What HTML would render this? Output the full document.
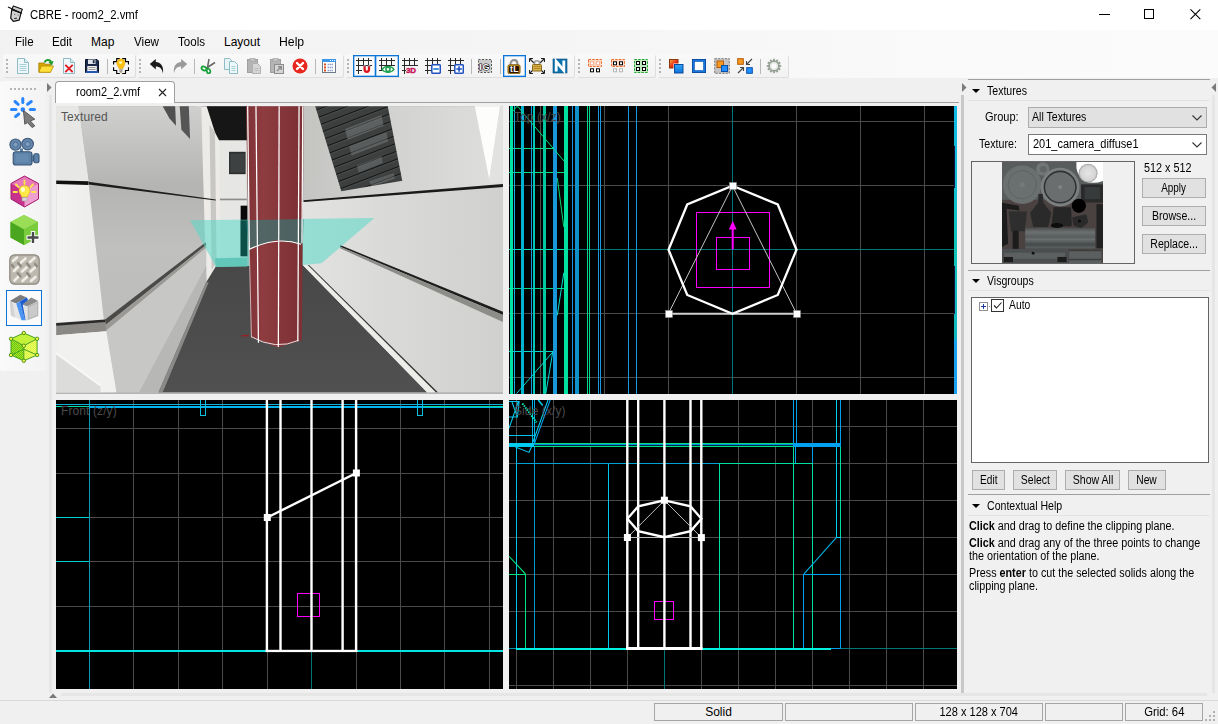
<!DOCTYPE html>
<html>
<head>
<meta charset="utf-8">
<title>CBRE - room2_2.vmf</title>
<style>
*{box-sizing:border-box;margin:0;padding:0}
html,body{width:1218px;height:724px;overflow:hidden;background:#f0f0f0}
body{position:relative;font-family:"Liberation Sans",sans-serif;font-size:11px;color:#000}
.abs{position:absolute}
.t{position:absolute;white-space:nowrap;transform-origin:0 50%}
#title{left:0;top:0;width:1218px;height:30px;background:#fff}
#menubar{left:0;top:30px;width:1218px;height:48px;background:linear-gradient(90deg,#f2f2f2 0%,#f5f5f5 45%,#fafafa 80%,#fbfbfb 100%)}
.mi{position:absolute;top:35px;font-size:12px;line-height:14px;white-space:nowrap;transform-origin:0 50%;transform:scaleX(.93)}
.strip{position:absolute;top:54px;height:23px;background:linear-gradient(#f9f9f9,#f2f2f2);border-radius:2px;box-shadow:1px 1px 0 #dedede}
.grip{position:absolute;top:59px;width:2px;height:14px;background:repeating-linear-gradient(#b4b4b4 0 2px,transparent 2px 4px)}
.sep{position:absolute;top:59px;width:1px;height:15px;background:#b8b8b8}
.ic{position:absolute;top:58px;width:16px;height:16px}
.sel{position:absolute;border:1px solid #0a74d8;background:#fafafa;box-shadow:inset 0 0 0 .5px #5aa2e4}
.vp{position:absolute;overflow:hidden;background:#000}
.vl{position:absolute;left:5px;top:4px;font-size:12px;line-height:14px;color:#555;white-space:nowrap;letter-spacing:.1px}
.btn{position:absolute;height:20px;border:1px solid #adadad;background:#e1e1e1;text-align:center;line-height:18.500px;font-size:12.500px;white-space:nowrap;overflow:visible}
.hdr{position:absolute;left:986.500px;margin-top:-.5px;font-size:12.500px;line-height:13px;white-space:nowrap;transform-origin:0 50%;transform:scaleX(0.845)}
.tri{position:absolute;left:972px;width:0;height:0;border-left:4px solid transparent;border-right:4px solid transparent;border-top:4px solid #000}
.hl{position:absolute;left:968px;width:242px;height:1px}
.sb{position:absolute;top:703px;height:18px;border:1px solid #a6a6a6;background:#f0f0f0;text-align:center;font-size:12px;line-height:16px}
.help{position:absolute;left:969px;margin-top:-.5px;font-size:12.500px;line-height:13px;white-space:nowrap;transform-origin:0 50%;transform:scaleX(0.862)}
</style>
</head>
<body>
<!-- TITLE BAR -->
<div id="title" class="abs"></div>
<div class="t" style="left:30px;top:7px;font-size:12px;line-height:16px;transform:scaleX(.947)">CBRE - room2_2.vmf</div>
<svg class="abs" style="left:0;top:0" width="30" height="30" viewBox="0 0 30 30"><path d="M11.800 9.600 L10.700 18.200 L13.300 21.400 L19.200 20.100 L21.100 12.900Z" fill="#d2d2d2" stroke="#111" stroke-width="1.200" stroke-linejoin="round"/><path d="M13.400 6 L22.300 9.200 L20.800 13.100 L11.900 9.300Z" fill="#cfcfcf" stroke="#111" stroke-width="1.100" stroke-linejoin="round"/><path d="M8 7 L21.800 13.300" stroke="#111" stroke-width="1.100"/><path d="M14.200 18.500 L17 18.200" stroke="#222" stroke-width="1"/><path d="M14 14.300 L15.300 14.600 M17.500 15 L18.600 15.200" stroke="#555" stroke-width=".8"/></svg>

<svg class="abs" style="left:1090px;top:0" width="128" height="30"><path d="M9 14.500h11" stroke="#000" stroke-width="1" fill="none" shape-rendering="crispEdges"/><rect x="54.500" y="9.500" width="9" height="9" fill="none" stroke="#000" shape-rendering="crispEdges"/><path d="M100.500 9.300 L110.300 19.100 M110.300 9.300 L100.500 19.100" stroke="#000" stroke-width="1.050" fill="none"/></svg>


<!-- MENU -->
<div id="menubar" class="abs"></div>
<div class="mi" style="left:15px;transform:scaleX(0.96)">File</div>
<div class="mi" style="left:52px;transform:scaleX(0.97)">Edit</div>
<div class="mi" style="left:91px;transform:scaleX(1.0)">Map</div>
<div class="mi" style="left:134px;transform:scaleX(0.97)">View</div>
<div class="mi" style="left:178px;transform:scaleX(0.965)">Tools</div>
<div class="mi" style="left:224px;transform:scaleX(1.0)">Layout</div>
<div class="mi" style="left:279px;transform:scaleX(1.02)">Help</div>

<!-- TOOLBAR -->
<div class="strip" style="left:3px;width:132px"></div>
<div class="strip" style="left:137px;width:206px"></div>
<div class="strip" style="left:345px;width:229px"></div>
<div class="strip" style="left:576px;width:79px"></div>
<div class="strip" style="left:657px;width:131px"></div>
<div class="grip" style="left:6px"></div>
<svg class="ic" style="left:15px;top:58px" viewBox="0 0 16 16"><path d="M2.500 .5 H9.500 L13.500 4.500 V15.500 H2.500Z" fill="#eef8fa" stroke="#8fbcc4"/><path d="M9.500 .5 V4.500 H13.500" fill="#d8ecf0" stroke="#8fbcc4"/><path d="M4.500 6.500h7M4.500 8.500h7M4.500 10.500h7M4.500 12.500h7" stroke="#a9cfd6"/></svg>
<svg class="ic" style="left:38px;top:58px" viewBox="0 0 16 16"><path d="M.8 5 H6 L7 6.200 H12.500 V14 H.8Z" fill="#d9a600" stroke="#a87f00" stroke-width=".8"/><path d="M3.300 8 H15.500 L12.600 14.300 H.8Z" fill="#ffdf3a" stroke="#b28a00" stroke-width=".8"/><path d="M6.500 4.500 C7.500 1.500 11.500 1 13 3.800" fill="none" stroke="#1a9a2c" stroke-width="2"/><path d="M10.300 4 L15.500 3 L14 7.600Z" fill="#1a9a2c"/></svg>
<svg class="ic" style="left:61px;top:58px" viewBox="0 0 16 16"><path d="M2.500 .5 H9.500 L13.500 4.500 V15.500 H2.500Z" fill="#eef8fa" stroke="#8fbcc4"/><path d="M9.500 .5 V4.500 H13.500" fill="#d8ecf0" stroke="#8fbcc4"/><path d="M4.300 6.800 L11.700 14.200 M11.700 6.800 L4.300 14.200" stroke="#e01b24" stroke-width="1.900"/></svg>
<svg class="ic" style="left:84px;top:58px" viewBox="0 0 16 16"><path d="M1.500 1.500 H13 L14.500 3 V14.500 H1.500Z" fill="#1c2a4a" stroke="#0c1428"/><rect x="4" y="1.500" width="7.500" height="4.500" fill="#dfe3ea"/><rect x="8.800" y="2.200" width="1.800" height="3" fill="#1c2a4a"/><rect x="3.300" y="8" width="9.500" height="5" fill="#f2f2f2"/><path d="M4.500 9.500h7M4.500 11.500h7" stroke="#999"/><rect x="2" y="13.300" width="12" height="1.500" fill="#2a6bd8"/></svg>
<div class="sep" style="left:107px"></div>
<svg class="ic" style="left:113px;top:58px" viewBox="0 0 16 16"><path d="M6.800 .6 H3.700 V3.600 H.6 V6.600 M.6 9.300 V12.500 H3.700 V15.500 H6.800 M9.200 15.500 H12.500 V12.500 H15.500 V9.300 M15.500 6.600 V3.600 H12.500 V.6 H9.200" fill="none" stroke="#000" stroke-width="1.150"/><path d="M7.900 1 C10.600 1 12 3 12 5.200 C12 7.600 10 8.600 9.900 10.800 H5.900 C5.800 8.600 3.800 7.600 3.800 5.200 C3.800 3 5.200 1 7.900 1Z" fill="#fcc010" stroke="#e8a200" stroke-width=".5"/><ellipse cx="7.600" cy="4.600" rx="1.700" ry="1.300" fill="#fff4b0"/><rect x="6.200" y="11.100" width="3.400" height="2.600" fill="#a8a8a8"/><rect x="6.900" y="13.600" width="2" height=".9" fill="#8a6a2a"/></svg>
<div class="grip" style="left:139px"></div>
<svg class="ic" style="left:149px;top:58px" viewBox="0 0 16 16"><path d="M.8 6 L6.800 1 V4 C11.500 4 15 8 14 15.500 C13 10.500 10.500 8.600 6.800 8.600 V11.500Z" fill="#1a1a1a"/></svg>
<svg class="ic" style="left:172px;top:58px" viewBox="0 0 16 16"><path d="M15.200 6 L9.200 1 V4 C4.500 4 1 8 2 15.500 C3 10.500 5.500 8.600 9.200 8.600 V11.500Z" fill="#9a9a9a"/></svg>
<div class="sep" style="left:194px"></div>
<svg class="ic" style="left:200px;top:58px" viewBox="0 0 16 16"><path d="M9 1 L7.500 9.500 M15 4.500 L6.500 10" stroke="#666" stroke-width="1.500" fill="none"/><ellipse cx="4" cy="10.500" rx="2.600" ry="1.800" fill="none" stroke="#16a03a" stroke-width="1.700" transform="rotate(25 4 10.500)"/><ellipse cx="8.500" cy="13" rx="1.700" ry="2.500" fill="none" stroke="#16a03a" stroke-width="1.700" transform="rotate(-15 8.500 13)"/></svg>
<svg class="ic" style="left:223px;top:58px" viewBox="0 0 16 16"><path d="M1.500 .5 H6.500 L9.500 3.500 V11.500 H1.500Z" fill="#e6f4f6" stroke="#8fbcc4"/><path d="M6.500 3.500 H11.500 L14.500 6.500 V15.500 H6.500Z" fill="#eef8fa" stroke="#8fbcc4"/><path d="M8.500 8.500h4M8.500 10.500h4M8.500 12.500h4" stroke="#a9cfd6"/></svg>
<svg class="ic" style="left:246px;top:58px" viewBox="0 0 16 16"><rect x="1.500" y="1.500" width="10" height="13" fill="#b4b4b4" stroke="#a0a0a0"/><rect x="4" y=".5" width="5" height="2.500" fill="#c8c8c8" stroke="#a0a0a0" stroke-width=".6"/><path d="M6.500 5.500 H11.500 L14.500 8.500 V15.500 H6.500Z" fill="#d6d6d6" stroke="#b0b0b0"/><path d="M8.500 10.500h4M8.500 12.500h4" stroke="#bcbcbc"/></svg>
<svg class="ic" style="left:269px;top:58px" viewBox="0 0 16 16"><rect x="1.500" y="1.500" width="10" height="13" fill="#b4b4b4" stroke="#a0a0a0"/><rect x="4" y=".5" width="5" height="2.500" fill="#c8c8c8" stroke="#a0a0a0" stroke-width=".6"/><rect x="5.500" y="6.500" width="9" height="9" fill="#d4d4d4" stroke="#8c8c8c"/><path d="M8 13 L12 9 M9 8.700 H12.300 V12" fill="none" stroke="#8c8c8c" stroke-width="1.400"/></svg>
<svg class="ic" style="left:292px;top:58px" viewBox="0 0 16 16"><circle cx="8" cy="8" r="7.500" fill="#e8281e"/><path d="M5 5 L11 11 M11 5 L5 11" stroke="#fff" stroke-width="2.400" stroke-linecap="round"/></svg>
<div class="sep" style="left:315px"></div>
<svg class="ic" style="left:321px;top:58px" viewBox="0 0 16 16"><rect x="1.500" y="1.500" width="13" height="13" fill="#fff" stroke="#6d7a8a"/><rect x="1" y="1" width="14" height="3" fill="#3a96e8"/><path d="M9 2.500h1M11 2.500h1M13 2.500h1" stroke="#fff"/><rect x="3" y="5.500" width="2" height="2" fill="#d8501c"/><rect x="3" y="8.500" width="2" height="2" fill="#d8501c"/><rect x="3" y="11.500" width="2" height="2" fill="#d8501c"/><path d="M6.500 6.500h6M6.500 9.500h6M6.500 12.500h6" stroke="#8aa0c8" stroke-width="1.400" stroke-dasharray="1.500 .5"/></svg>
<div class="grip" style="left:347px"></div>
<div class="sel" style="left:353px;top:55px;width:23px;height:22px"></div>
<div class="sel" style="left:375px;top:55px;width:24px;height:22px"></div>
<svg class="ic" style="left:356px;top:58px" viewBox="0 0 16 16"><path d="M2.500 0V16M7.500 0V8M12.500 0V8M0 2.500H16M0 7.500H16M0 12.500H6" stroke="#2a2a2a" stroke-width="1" fill="none"/><path d="M8.600 8 V11.300 C8.600 14.600 13 14.600 13 11.300 V8" fill="none" stroke="#e0141e" stroke-width="2.300"/><path d="M7.450 7.800h2.300M11.850 7.800h2.300" stroke="#8a8a8a" stroke-width="1.400"/></svg>
<svg class="ic" style="left:379px;top:58px" viewBox="0 0 16 16"><path d="M2.500 0V12M7.500 0V7.500M12.500 0V7.500M0 2.500H16M0 7.500H16M0 12.500H3.500" stroke="#2a2a2a" stroke-width="1" fill="none"/><path d="M3 11.400 C6 7.400 12 7.400 15 11.400 C12 15.300 6 15.300 3 11.400Z" fill="#fff" stroke="#19a04a" stroke-width="1.200"/><circle cx="9" cy="11.300" r="2.100" fill="#fff" stroke="#19a04a" stroke-width="1.500"/></svg>
<svg class="ic" style="left:402px;top:58px" viewBox="0 0 16 16"><path d="M2.500 0V16M7.500 0V8M12.500 0V8M0 2.500H16M0 7.500H16M0 12.500H4" stroke="#2a2a2a" stroke-width="1" fill="none"/><text x="4" y="15.300" font-family="Liberation Sans,sans-serif" font-weight="bold" font-size="8" fill="#c8105a" stroke="#c8105a" stroke-width=".4" letter-spacing="-.3">3D</text></svg>
<svg class="ic" style="left:425px;top:58px" viewBox="0 0 16 16"><path d="M2.500 0V16M7.500 0V7M12.500 0V7M0 2.500H16M0 7.500H7M0 12.500H7" stroke="#2a2a2a" stroke-width="1" fill="none"/><rect x="6.800" y="6.800" width="8.500" height="8.500" rx="1" fill="#fff" stroke="#2252c0" stroke-width="1.500"/><path d="M8.300 11h5.500" stroke="#1a78d0" stroke-width="1.600"/></svg>
<svg class="ic" style="left:448px;top:58px" viewBox="0 0 16 16"><path d="M2.500 0V16M7.500 0V7M12.500 0V7M0 2.500H16M0 7.500H7M0 12.500H7" stroke="#2a2a2a" stroke-width="1" fill="none"/><rect x="6.800" y="6.800" width="8.500" height="8.500" rx="1" fill="#fff" stroke="#2252c0" stroke-width="1.500"/><path d="M8.300 11h5.500M11.050 8.300v5.500" stroke="#1a50c0" stroke-width="1.600"/></svg>
<div class="sep" style="left:471px"></div>
<svg class="ic" style="left:477px;top:58px" viewBox="0 0 16 16"><rect x="1.500" y="1.500" width="13" height="13" fill="#cbcbcb" stroke="#555" stroke-dasharray="2 1.500"/><text x="2.300" y="11.600" font-family="Liberation Sans,sans-serif" font-weight="bold" font-size="9" fill="#fff" stroke="#000" stroke-width="1.100" paint-order="stroke" letter-spacing=".6">IG</text></svg>
<div class="sep" style="left:500px"></div>
<div class="sel" style="left:503px;top:55px;width:23px;height:22px"></div>
<svg class="ic" style="left:506px;top:58px" viewBox="0 0 16 16"><path d="M4.700 8 V5.500 C4.700 1 11.300 1 11.300 5.500 V8" fill="none" stroke="#8e8e8e" stroke-width="2.200"/><path d="M5.800 8 V5.600 C5.800 2.600 10.200 2.600 10.200 5.600 V8" fill="none" stroke="#d8d8d8" stroke-width=".8"/><rect x="2" y="6.800" width="12" height="9" rx="1.500" fill="#c8962a" stroke="#7a5608"/><rect x="3" y="8" width="10" height="7" rx="1" fill="#2a1400"/><text x="4" y="14.300" font-family="Liberation Sans,sans-serif" font-weight="bold" font-size="8.500" fill="#fff" letter-spacing=".5">tL</text></svg>
<svg class="ic" style="left:529px;top:58px" viewBox="0 0 16 16"><path d="M1 1 L5 5 M15 1 L11 5 M1 15 L5 11 M15 15 L11 11" stroke="#222" stroke-width="1.100"/><path d="M.5 .5H4M.5 .5V4M15.500 .5H12M15.500 .5V4M.5 15.500H4M.5 15.500V12M15.500 15.500H12M15.500 15.500V12" stroke="#222" stroke-width="1.100" fill="none"/><path d="M5.500 7 V5 C5.500 2 10.500 2 10.500 5 V7" fill="none" stroke="#9a9a9a" stroke-width="1.600"/><rect x="3.500" y="6.500" width="9" height="6.500" rx="1" fill="#d8b050" stroke="#8a6a18"/><path d="M4.500 8.500h7M4.500 10.500h7" stroke="#b08820"/></svg>
<svg class="ic" style="left:552px;top:58px" viewBox="0 0 16 16"><rect x="1" y="1" width="14" height="14" fill="#0b72b0"/><rect x="1" y="1" width="14" height="14" fill="none" stroke="#084a78" stroke-width=".6"/><path d="M4.200 13.500 V3.500 L11.800 12.500 V2.500" fill="none" stroke="#fff" stroke-width="2.800" stroke-linejoin="miter"/></svg>
<div class="grip" style="left:578px"></div>
<svg class="ic" style="left:587px;top:58px" viewBox="0 0 16 16"><rect x="1.500" y="1.500" width="13" height="7" fill="#ffd8c4" stroke="#ec6a2c" stroke-width="1" stroke-dasharray="2.500 1.200"/><rect x="3.5" y="3.8" width="3" height="3" fill="#fff" stroke="#f4b294" stroke-width="1"/><rect x="9.5" y="3.8" width="3" height="3" fill="#fff" stroke="#f4b294" stroke-width="1"/><rect x="3.5" y="10.8" width="3" height="3" fill="#fff" stroke="#000" stroke-width="1"/><rect x="9.5" y="10.8" width="3" height="3" fill="#fff" stroke="#000" stroke-width="1"/></svg>
<svg class="ic" style="left:610px;top:58px" viewBox="0 0 16 16"><rect x="1.500" y="1.500" width="13" height="7" fill="#ffd8c4" stroke="#ec6a2c" stroke-width="1" stroke-dasharray="2.500 1.200"/><rect x="3.5" y="3.8" width="3" height="3" fill="#fff" stroke="#000" stroke-width="1"/><rect x="9.5" y="3.8" width="3" height="3" fill="#fff" stroke="#000" stroke-width="1"/><rect x="3.5" y="10.8" width="3" height="3" fill="#fff" stroke="#b4b4b4" stroke-width="1"/><rect x="9.5" y="10.8" width="3" height="3" fill="#fff" stroke="#b4b4b4" stroke-width="1"/></svg>
<svg class="ic" style="left:633px;top:58px" viewBox="0 0 16 16"><rect x="1.500" y="1.500" width="13" height="13" fill="#bfeabf" stroke="#22a832" stroke-width="1" stroke-dasharray="2.500 1.200"/><rect x="3.5" y="3.5" width="3" height="3" fill="#fff" stroke="#000" stroke-width="1"/><rect x="9.5" y="3.5" width="3" height="3" fill="#fff" stroke="#000" stroke-width="1"/><rect x="3.5" y="9.5" width="3" height="3" fill="#fff" stroke="#000" stroke-width="1"/><rect x="9.5" y="9.5" width="3" height="3" fill="#fff" stroke="#000" stroke-width="1"/></svg>
<div class="grip" style="left:659px"></div>
<svg class="ic" style="left:668px;top:58px" viewBox="0 0 16 16"><defs><linearGradient id="cv1" x1="0" y1="0" x2="1" y2="1"><stop offset="0" stop-color="#f8b040"/><stop offset=".6" stop-color="#e82010"/></linearGradient><linearGradient id="cv2" x1="0" y1="0" x2="0" y2="1"><stop offset="0" stop-color="#30a8f8"/><stop offset="1" stop-color="#1070d8"/></linearGradient></defs><rect x="1.500" y="1.500" width="8.500" height="8.500" fill="url(#cv1)" stroke="#8a3808"/><rect x="5.500" y="5.500" width="10" height="10" fill="#fff"/><rect x="6.500" y="6.500" width="8.500" height="8.500" fill="url(#cv2)" stroke="#0a4a9a"/></svg>
<svg class="ic" style="left:691px;top:58px" viewBox="0 0 16 16"><rect x="1" y="1" width="14" height="14" fill="#0a3e8a"/><rect x="1.700" y="1.700" width="12.600" height="12.600" fill="#1878e0"/><rect x="3.600" y="3.600" width="8.800" height="8.800" fill="#fff" stroke="#0a4ea8" stroke-width=".5"/></svg>
<svg class="ic" style="left:714px;top:58px" viewBox="0 0 16 16"><rect x=".7" y=".7" width="14.600" height="14.600" fill="#c4c4c4" stroke="#7a7a7a" stroke-dasharray="2.200 1.200"/><rect x="3" y="3" width="6.500" height="6.500" fill="#f59a20" stroke="#b85a08"/><rect x="7.500" y="7.500" width="6" height="6" fill="#1e90ff" stroke="#0a4ea8"/></svg>
<svg class="ic" style="left:737px;top:58px" viewBox="0 0 16 16"><rect x=".7" y=".7" width="5.600" height="5.600" fill="#f59a20" stroke="#b85a08"/><rect x="9.700" y="9.700" width="5.600" height="5.600" fill="#1e90ff" stroke="#0a4ea8"/><path d="M15 1 L9.500 6.500 M9.500 3 V6.500 H13 M1 15 L6.500 9.500 M3 9.500 H6.500 V13" fill="none" stroke="#444" stroke-width="1.100"/></svg>
<div class="sep" style="left:760px"></div>
<svg class="ic" style="left:766px;top:58px" viewBox="0 0 16 16"><rect x="7.100" y=".8" width="1.800" height="3" fill="#949e92" transform="rotate(0 8 8)"/><rect x="7.100" y=".8" width="1.800" height="3" fill="#949e92" transform="rotate(30 8 8)"/><rect x="7.100" y=".8" width="1.800" height="3" fill="#949e92" transform="rotate(60 8 8)"/><rect x="7.100" y=".8" width="1.800" height="3" fill="#949e92" transform="rotate(90 8 8)"/><rect x="7.100" y=".8" width="1.800" height="3" fill="#949e92" transform="rotate(120 8 8)"/><rect x="7.100" y=".8" width="1.800" height="3" fill="#949e92" transform="rotate(150 8 8)"/><rect x="7.100" y=".8" width="1.800" height="3" fill="#949e92" transform="rotate(180 8 8)"/><rect x="7.100" y=".8" width="1.800" height="3" fill="#949e92" transform="rotate(210 8 8)"/><rect x="7.100" y=".8" width="1.800" height="3" fill="#949e92" transform="rotate(240 8 8)"/><rect x="7.100" y=".8" width="1.800" height="3" fill="#949e92" transform="rotate(270 8 8)"/><rect x="7.100" y=".8" width="1.800" height="3" fill="#949e92" transform="rotate(300 8 8)"/><rect x="7.100" y=".8" width="1.800" height="3" fill="#949e92" transform="rotate(330 8 8)"/><circle cx="8" cy="8" r="4.900" fill="#fbfbfb" stroke="#949e92" stroke-width="1.700"/><circle cx="8" cy="8" r="3.300" fill="none" stroke="#d0d4ce" stroke-width=".7"/></svg>

<!-- LEFT TOOLS -->
<div class="abs" style="left:0;top:81px;width:46px;height:290px;background:linear-gradient(90deg,#fafafa,#f3f3f3);border-radius:3px 0 0 3px"></div>
<div class="abs" style="left:10px;top:88px;width:26px;height:2px;background:repeating-linear-gradient(90deg,#b4b4b4 0 2px,transparent 2px 4px)"></div>
<!-- pointer -->
<svg class="abs" style="left:8px;top:96px" width="32" height="32" viewBox="0 0 32 32"><g stroke="#2a86ff" stroke-width="3" stroke-linecap="round"><path d="M14.800 2.500V6.500M3.500 13.600H8M22.200 13.600H26.500M7 5.500 L10.200 8.300M19.600 8.300 L23.300 5.500M7.600 20.500 L10.800 18"/></g><circle cx="14.800" cy="13.600" r="2.300" fill="#2a86ff"/><path d="M15.400 14.400 L26.800 23.200 L22.300 24.900 L26.800 29.900 L24 31.500 L19.600 26.600 L16.800 28.200Z" fill="#7c7c7c" stroke="#4e4e4e" stroke-width=".9" stroke-linejoin="round"/></svg>
<!-- camera -->
<svg class="abs" style="left:8px;top:137px" width="32" height="30" viewBox="0 0 32 30"><circle cx="7.500" cy="7.600" r="5.600" fill="#6488ae" stroke="#3e5878" stroke-width="1.100"/><circle cx="7.500" cy="7.600" r="2.600" fill="#7c9cc0" stroke="#466486" stroke-width=".8"/><circle cx="19.600" cy="7.100" r="5.800" fill="#6488ae" stroke="#3e5878" stroke-width="1.100"/><circle cx="19.600" cy="7.100" r="2.700" fill="#7c9cc0" stroke="#466486" stroke-width=".8"/><rect x="12" y="11.500" width="3" height="4" fill="#5a7ea4"/><rect x="5.200" y="14.800" width="18.800" height="13.200" rx="2.600" fill="#5c82a8" stroke="#3a5676" stroke-width="1.100"/><rect x="7.500" y="17" width="13" height="8" rx="1.500" fill="#6a8eb4" opacity=".7"/><rect x="23.500" y="19" width="3" height="5" fill="#5478a0" stroke="#3a5676" stroke-width=".6"/><rect x="25.800" y="16.800" width="5.200" height="9" rx="1.600" fill="#5c82a8" stroke="#3a5676" stroke-width="1.100"/></svg>
<!-- light entity -->
<svg class="abs" style="left:9px;top:175px" width="32" height="33" viewBox="0 0 32 33"><path d="M15.500 1 L29.500 8.500 V24 L15.500 32 L2 24 V8.500Z" fill="#c8328c"/><path d="M15.500 1 L29.500 8.500 L15.500 16 L2 8.500Z" fill="#e878b8"/><path d="M15.500 16 L29.500 8.500 V24 L15.500 32Z" fill="#f0a0d0"/><path d="M15.500 1 L29.500 8.500 V24 L15.500 32 L2 24 V8.500Z" fill="none" stroke="#a02070" stroke-width="1"/><g stroke="#ffe84a" stroke-width="1.800" stroke-linecap="round"><path d="M15.500 5.500V9M7 9.500 L9.500 12M24 9.500 L21.500 12M4.500 17H8M26.500 17H23"/></g><path d="M15.500 10.500 C19.500 10.500 21 13.500 21 15.500 C21 18.500 18.500 19.500 18.500 22 H12.500 C12.500 19.500 10 18.500 10 15.500 C10 13.500 11.500 10.500 15.500 10.500Z" fill="#ffe84a" stroke="#e0b010" stroke-width=".6"/><ellipse cx="14" cy="14.500" rx="2" ry="2.500" fill="#fffbd0"/><rect x="13" y="22.500" width="5" height="3.500" fill="#d8d8d8" stroke="#999" stroke-width=".5"/></svg>
<!-- green cube -->
<svg class="abs" style="left:8px;top:213px" width="34" height="34" viewBox="0 0 34 34"><path d="M16 2 L30 9 V24.500 L16 32 L2.500 24.500 V9Z" fill="#5cb82c"/><path d="M16 2 L30 9 L16 16.500 L2.500 9Z" fill="#9ade58"/><path d="M16 16.500 L30 9 V24.500 L16 32Z" fill="#7acc3c"/><path d="M16 16.500 L2.500 9 V24.500 L16 32Z" fill="#4aa61e"/><path d="M25 18 V31 M18.500 24.500 H31.500" stroke="#fff" stroke-width="4.400"/><path d="M25 19 V30 M19.500 24.500 H30.500" stroke="#4a4a4a" stroke-width="2.400"/></svg>
<!-- texture -->
<svg class="abs" style="left:9px;top:254px" width="31" height="31" viewBox="0 0 31 31"><rect x=".8" y=".8" width="29.400" height="29.400" rx="5" fill="#bdb8ae" stroke="#8a867e" stroke-width="1.200"/><g stroke="#efede8" stroke-width="2.600" stroke-linecap="round"><path d="M4 7 L8 3.500M12 8.500 L16.500 4.500M21 8 L25.500 4M5 17 L9 13M13 17.500 L17.500 13.500M21.500 17.500 L26 13.500M5.500 26.500 L9.500 22.500M13.500 27 L18 23M22 27 L26.500 23"/></g><g stroke="#8e8a82" stroke-width="2.200" stroke-linecap="round"><path d="M9 9 L12 12.500M18 9.500 L21 13M8.500 19 L11.500 22.500M18 19 L21 22.500M26 10 L28 12.500M3 11 L4.500 13"/></g></svg>
<!-- clip (selected) -->
<div class="abs" style="left:6px;top:290px;width:36px;height:36px;border:1px solid #0a74d8;background:#fafafa"></div>
<svg class="abs" style="left:8px;top:293px" width="32" height="30" viewBox="0 0 32 30"><path d="M1.900 8.100 L12.300 1.700 L18.700 4.600 L8.200 10.400Z" fill="#7c7c7c"/><path d="M1.900 8.400 L8.200 10.500 L13.500 27.200 L3 22.600Z" fill="#e6e6e6"/><path d="M1.900 8.400 L4.500 9.300 L7 24.400 L3 22.600Z" fill="#d2d2d2"/><path d="M8.200 10.400 L11.800 8.400 L17 27.200 L13.500 27.200Z" fill="#4a94f4"/><path d="M11.800 8.400 L18.700 4.600 L19.800 6.200 L17.800 27.200 L17 27.200Z" fill="#1a5cd4"/><path d="M14.600 11.300 L23.300 4.600 L30.300 8.100 L19.800 13.200Z" fill="#8c8c8c"/><path d="M14.600 11.500 L19.600 13.300 L19.600 27.200 L17.600 26.900Z" fill="#e2e2e2"/><path d="M19.600 13.300 L30.300 8.400 L30.300 22.900 L19.600 27.200Z" fill="#b8b8b8"/><path d="M21 14.300 L29 10.600 L29 22 L21 25.300Z" fill="#cacaca"/></svg>
<!-- vertex cube -->
<svg class="abs" style="left:8px;top:330px" width="33" height="35" viewBox="0 0 33 35"><defs><pattern id="hx" width="2" height="2" patternUnits="userSpaceOnUse"><rect width="2" height="2" fill="#a4e820"/><rect width="1" height="1" fill="#6cc018"/><rect x="1" y="1" width="1" height="1" fill="#6cc018"/></pattern><pattern id="hy" width="2" height="2" patternUnits="userSpaceOnUse"><rect width="2" height="2" fill="#f0fc6a"/><rect width="1" height="1" fill="#d4f43a"/><rect x="1" y="1" width="1" height="1" fill="#d4f43a"/></pattern></defs><path d="M15.800 3 L29.100 8.800 L15.800 15.700 L3 8.800Z" fill="#c4f23a"/><path d="M3 8.800 L15.800 15.700 V30.800 L3 25Z" fill="url(#hx)"/><path d="M15.800 15.700 L29.100 8.800 V25 L15.800 30.800Z" fill="url(#hy)"/><path d="M15.800 3 L29.100 8.800 V25 L15.800 30.800 L3 25 V8.800Z M3 8.800 L15.800 15.700 L29.100 8.800 M15.800 15.700 V30.800 M3 25 L15.800 19.200 L29.100 25" fill="none" stroke="#48a020" stroke-width="1"/><g fill="#f6f83e" stroke="#3c8c1c" stroke-width=".9"><circle cx="15.800" cy="3" r="1.700"/><circle cx="29.100" cy="8.800" r="1.700"/><circle cx="29.100" cy="25" r="1.700"/><circle cx="15.800" cy="30.800" r="1.700"/><circle cx="3" cy="25" r="1.700"/><circle cx="3" cy="8.800" r="1.700"/><circle cx="15.800" cy="15.700" r="1.700"/></g></svg>


<!-- TABS -->

<svg class="abs" style="left:45px;top:82px" width="8" height="12"><path d="M2 1 L6.5 5.5 L2 10Z" fill="#7a7a7a"/></svg>
<div class="abs" style="left:174px;top:102px;width:785px;height:1px;background:#a0a0a0"></div>
<div class="abs" style="left:55px;top:81px;width:120px;height:22px;background:#fff;border:1px solid #a0a0a0;border-bottom:none;border-radius:4px 4px 0 0"></div>
<div class="t" style="left:76px;top:84px;font-size:12px;line-height:16px;transform:scaleX(.915)">room2_2.vmf</div>
<svg class="abs" style="left:158px;top:88px" width="9" height="9"><path d="M1 1 L8 8 M8 1 L1 8" stroke="#222" stroke-width="1.1" fill="none"/></svg>


<!-- VIEWPORTS -->
<div class="vp" id="vp1" style="left:56px;top:106px;width:447px;height:288px;background:#b5b4b2"><svg class="abs" style="left:-6px;top:-6px" width="460" height="300" viewBox="0 0 1110 724" preserveAspectRatio="none">
<defs>
<linearGradient id="gface" x1="0" y1="0" x2="0" y2="1"><stop offset="0" stop-color="#d0d0ce"/><stop offset=".28" stop-color="#b4b4b2"/><stop offset=".5" stop-color="#c0c0be"/><stop offset=".75" stop-color="#bcbcba"/><stop offset="1" stop-color="#c6c6c4"/></linearGradient>
<linearGradient id="gnear" x1="0" y1="0" x2="1" y2="0"><stop offset="0" stop-color="#f3f3f1"/><stop offset="1" stop-color="#e9e9e7"/></linearGradient>
<linearGradient id="gfloor" x1="0" y1="0" x2="0" y2="1"><stop offset="0" stop-color="#484848"/><stop offset="1" stop-color="#505050"/></linearGradient>
<linearGradient id="gred" x1="0" y1="0" x2="1" y2="0"><stop offset="0" stop-color="#7e3236"/><stop offset=".3" stop-color="#8e3c40"/><stop offset=".6" stop-color="#86363a"/><stop offset="1" stop-color="#7a3034"/></linearGradient>
<linearGradient id="grw" x1="0" y1="0" x2="1" y2="0"><stop offset="0" stop-color="#e2e2e0"/><stop offset=".4" stop-color="#dadad8"/><stop offset="1" stop-color="#d0d0ce"/></linearGradient>
<linearGradient id="gru" x1="0" y1="0" x2="1" y2="0"><stop offset="0" stop-color="#c4c4c2"/><stop offset=".3" stop-color="#cfcfcd"/><stop offset=".75" stop-color="#d9d9d7"/><stop offset="1" stop-color="#dededc"/></linearGradient>
<pattern id="vent" width="20" height="18" patternUnits="userSpaceOnUse" patternTransform="rotate(-21)"><rect width="20" height="18" fill="#3d3f3f"/><rect y="0" width="20" height="2.200" fill="#0e0e0e"/><rect y="2.200" width="20" height="3" fill="#474a4a"/></pattern>
</defs>
<rect x="0" y="0" width="1110" height="724" fill="#b5b4b2"/>
<!-- black ceiling & far wall -->
<polygon points="365,15 475,15 475,100 365,100" fill="#161616"/>
<polygon points="398,97 475,97 475,404 398,404" fill="#e6e6e4"/>
<rect x="398" y="238" width="77" height="4" fill="#8c8c8a"/>
<rect x="432" y="125" width="40" height="54" fill="#2c2e2e"/><rect x="435" y="129" width="35" height="46" fill="#3e4141"/>
<rect x="460" y="255" width="16" height="122" fill="#080808"/>
<!-- far columns -->
<polygon points="352,15 378,15 398,78 408,97 412,392 378,445 370,300" fill="#ecebe8"/>
<polygon points="385,60 398,78 402,392 390,410" fill="#c8c7c4"/>
<!-- gray receding face of left wall -->
<polygon points="68,15 365,15 370,200 377,440 262,705 160,705 130,530 93,200" fill="url(#gface)"/>
<polygon points="272,15 302,15 304,62 288,44" fill="#505050"/><polygon points="313,15 335,15 338,94 317,72" fill="#555"/>
<!-- black stripe on face -->
<polygon points="93,197 400,240 400,242.5 93,204" fill="#1c1c1c"/>
<!-- lower rail on face -->
<polygon points="133,530 376,343 377,350 134,543" fill="#4a4a48"/><polygon points="134,543 377,350 377,356 136,556" fill="#9a9996"/>
<polygon points="136,556 377,356 377,440 262,705 160,705" fill="#c7c7c5"/><polygon points="262,705 377,440 377,400 215,705" fill="#a9a9a7" opacity=".55"/>
<!-- near wall (bright) -->
<polygon points="15,15 68,15 93,200 130,530 160,705 15,705" fill="url(#gnear)"/>
<polygon points="15,15 68,15 93,196 15,194" fill="#e7e7e5"/>
<polygon points="15,194 93,196 93,205 15,203" fill="#111"/>
<polygon points="15,540 133,532 136,558 15,568" fill="#8a8986"/><polygon points="15,538 133,530 134,536 15,545" fill="#2a2a2a"/>
<polygon points="15,568 136,558 160,705 15,705" fill="#f1f1ef"/><polygon points="15,612 122,690 122,705 15,705" fill="#dcdcda"/><polygon points="15,608 122,686 122,692 15,614" fill="#f8f8f6"/>
<!-- floor -->
<polygon points="400,402 610,398 910,705 262,705 377,440" fill="url(#gfloor)"/>
<polygon points="377,440 383,440 272,705 262,705" fill="#8a8a88"/>
<!-- right wall upper -->
<polygon points="612,15 1093,15 1093,205 612,243" fill="url(#gru)"/>
<polygon points="612,90 640,15 700,15 612,243" fill="#c4c4c2" opacity=".6"/>
<polygon points="640,15 815,15 850,195 703,220" fill="url(#vent)"/><polygon points="712,70 800,36 805,62 718,96" fill="#9a9e9e" opacity=".35"/><polygon points="722,112 812,78 816,100 728,134" fill="#9a9e9e" opacity=".3"/><polygon points="740,158 800,135 803,152 745,175" fill="#9a9e9e" opacity=".3"/><polygon points="770,196 830,176 832,190 776,208" fill="#9a9e9e" opacity=".3"/>
<polygon points="1025,15 1086,15 1060,192" fill="#fdfdfb"/><polygon points="1086,15 1093,15 1093,200 1062,203 1060,192" fill="#e2e2e0"/>
<!-- right wall lower -->
<polygon points="610,246 1093,208 1093,705 910,705 610,398" fill="url(#grw)"/>
<polygon points="612,242 1093,203 1093,210 612,246" fill="#1a1a1a"/>
<polygon points="700,350 1093,511 1093,519 700,354" fill="#1e1e1e"/><polygon points="700,354 1093,519 1093,536 700,358" fill="#8c8c88"/>
<polygon points="610,398 622,398 931,705 910,705" fill="#ecece9"/><polygon points="622,398 625,398 936,705 931,705" fill="#333"/>
<!-- cyan plane -->
<polygon points="338,290 783,285 655,394 610,398 400,402" fill="#58d8c8" opacity=".55"/>
<rect x="460" y="291" width="16" height="86" fill="#0c4e48"/><polygon points="398,382 476,380 476,402 400,403" fill="#62c6b8"/>
<!-- red column -->
<polygon points="473,15 612,15 608,580 550,597 485,572 480,360" fill="url(#gred)"/>
<polygon points="473,290 612,287 610,348 545,338 480,360" fill="#2f7f7c" opacity=".62"/>
<g stroke="#fff" stroke-width="3" fill="none"><path d="M477,15 L481,360"/><path d="M497,15 L503,586"/><path d="M553,15 L551,596"/><path d="M601,15 L598,582"/><path d="M610,15 L608,346"/><path d="M480,361 Q545,328 606,348" stroke-width="2.500"/><path d="M485,571 Q545,605 600,580" stroke-width="2"/><path d="M481,361 L486,571" stroke-width="1.500"/></g>
<path d="M462,569 h18" stroke="#c00" stroke-width="2"/>
</svg>
<div class="vl">Textured</div>
</div>
<div class="vp" id="vp2" style="left:509px;top:106px;width:448px;height:288px"><svg class="abs" style="left:0;top:0" width="448" height="288" viewBox="0 0 448 288">
<g shape-rendering="crispEdges">
<rect x="31" y="0" width="1" height="288" fill="#4a4a4a"/>
<rect x="95" y="0" width="1" height="288" fill="#4a4a4a"/>
<rect x="159" y="0" width="1" height="288" fill="#4a4a4a"/>
<rect x="287" y="0" width="1" height="288" fill="#4a4a4a"/>
<rect x="351" y="0" width="1" height="288" fill="#4a4a4a"/>
<rect x="415" y="0" width="1" height="288" fill="#4a4a4a"/>
<rect x="0" y="15" width="448" height="1" fill="#4a4a4a"/>
<rect x="0" y="79" width="448" height="1" fill="#4a4a4a"/>
<rect x="0" y="207" width="448" height="1" fill="#4a4a4a"/>
<rect x="0" y="271" width="448" height="1" fill="#4a4a4a"/>
<rect x="223" y="0" width="1" height="288" fill="#007878"/>
<rect x="0" y="143" width="448" height="1" fill="#007878"/>
<rect x="0" y="42" width="45" height="1" fill="#00e080"/>
<rect x="0" y="66" width="56" height="1" fill="#00e080"/>
<rect x="0" y="143" width="58" height="1" fill="#00e0c0"/>
<rect x="0" y="182" width="56" height="1" fill="#00d890"/>
<rect x="0" y="245" width="45" height="1" fill="#00d8d0"/>
<rect x="1" y="0" width="3" height="288" fill="#00e4a8"/>
<rect x="5" y="0" width="1" height="288" fill="#10b0e0"/>
<rect x="12" y="0" width="3" height="288" fill="#00b4d0"/>
<rect x="22" y="0" width="1" height="288" fill="#1898e0"/>
<rect x="24" y="0" width="2" height="288" fill="#00c8b8"/>
<rect x="34" y="0" width="3" height="288" fill="#00c8a0"/>
<rect x="44" y="0" width="4" height="288" fill="#1898d8"/>
<rect x="55" y="0" width="4" height="288" fill="#00e0a0"/>
<rect x="63" y="0" width="1" height="288" fill="#1898e0"/>
<rect x="66" y="0" width="4" height="288" fill="#1090c8"/>
<rect x="78" y="0" width="1" height="288" fill="#00d890"/>
<rect x="80" y="0" width="1" height="288" fill="#00d890"/>
<rect x="89" y="0" width="1" height="288" fill="#1898e0"/>
<rect x="91" y="0" width="1" height="288" fill="#1898e0"/>
<rect x="119" y="0" width="1" height="288" fill="#1898e0"/>
<rect x="127" y="0" width="1" height="288" fill="#1898e0"/>
</g>
<defs><linearGradient id="rb2" x1="0" y1="0" x2="0" y2="1"><stop offset="0" stop-color="#10b8e8"/><stop offset=".3" stop-color="#10c0d0"/><stop offset=".5" stop-color="#10c4b8"/><stop offset=".8" stop-color="#10b8c0"/><stop offset=".82" stop-color="#18a0f0"/><stop offset="1" stop-color="#18a0f0"/></linearGradient></defs>
<rect x="445" y="0" width="3" height="288" fill="url(#rb2)"/><rect x="445" y="40" width="1" height="42" fill="#114"/><rect x="445" y="160" width="1" height="48" fill="#114"/>
<g fill="none" stroke-width="1">
<path d="M4.600 5 Q6 1.500 8 .5 Q10 .8 12 4.500 L55 55" stroke="#00e080"/>
<path d="M48.300 72 L54.800 121" stroke="#00d870"/>
<path d="M54.800 166.800 L48.300 209.300" stroke="#00e0d0"/>
<path d="M43.700 246.200 L7.500 287.600 M43.700 246.200 L36.800 287.600" stroke="#00d8d8"/>
</g>
<g fill="none" stroke="#ff00ff" stroke-width="1" shape-rendering="crispEdges"><rect x="187.500" y="106.500" width="73" height="75"/><rect x="207.500" y="131.500" width="33" height="32"/></g>
<path d="M223.700 143.500 V122" stroke="#ff00ff" stroke-width="2" fill="none"/><path d="M223.700 114.800 L219.800 123.500 L227.600 123.500Z" fill="#ff00ff"/>
<path d="M223.500 80 L159.500 207.500 M223.500 80 L287.500 207.500" stroke="#c4c4c4" stroke-width="1" fill="none"/>
<path d="M159.500 207.700 H287.500" stroke="#d0d0d0" stroke-width="2"/>
<polygon points="223.500,79.700 268.755,98.445 287.500,143.700 268.755,188.955 223.500,207.700 178.245,188.955 159.500,143.700 178.245,98.445" fill="none" stroke="#fff" stroke-width="2.300" stroke-linejoin="miter"/>
<rect x="220.5" y="76.5" width="7" height="7" fill="#fff" stroke="#888" stroke-width=".5"/>
<rect x="156.5" y="204.5" width="7" height="7" fill="#fff" stroke="#888" stroke-width=".5"/>
<rect x="284.5" y="204.5" width="7" height="7" fill="#fff" stroke="#888" stroke-width=".5"/>
</svg>
<div class="vl" style="color:#4a4a4a">Top (x/z)</div></div>
<div class="vp" id="vp3" style="left:56px;top:400px;width:447px;height:289px"><svg class="abs" style="left:0;top:0" width="447" height="289" viewBox="0 0 447 289">
<g shape-rendering="crispEdges">
<rect x="77" y="0" width="1" height="289" fill="#4a4a4a"/>
<rect x="122" y="0" width="1" height="289" fill="#4a4a4a"/>
<rect x="166" y="0" width="1" height="289" fill="#4a4a4a"/>
<rect x="211" y="0" width="1" height="289" fill="#4a4a4a"/>
<rect x="300" y="0" width="1" height="289" fill="#4a4a4a"/>
<rect x="344" y="0" width="1" height="289" fill="#4a4a4a"/>
<rect x="388" y="0" width="1" height="289" fill="#4a4a4a"/>
<rect x="433" y="0" width="1" height="289" fill="#4a4a4a"/>
<rect x="0" y="28" width="447" height="1" fill="#4a4a4a"/>
<rect x="0" y="73" width="447" height="1" fill="#4a4a4a"/>
<rect x="0" y="117" width="447" height="1" fill="#4a4a4a"/>
<rect x="0" y="161" width="447" height="1" fill="#4a4a4a"/>
<rect x="0" y="206" width="447" height="1" fill="#4a4a4a"/>
<rect x="255" y="0" width="1" height="289" fill="#007878"/>
<rect x="33" y="0" width="1" height="289" fill="#0a9ab8"/>
<rect x="0" y="117" width="33" height="1" fill="#00d0d0"/>
<rect x="0" y="161" width="33" height="1" fill="#00d0d0"/>
<rect x="0" y="4" width="447" height="1" fill="#10b0e0"/>
<rect x="0" y="6" width="33" height="1" fill="#00e0a0"/><rect x="33" y="6" width="334" height="1" fill="#00b8f0"/><rect x="367" y="6" width="80" height="1" fill="#00e0a0"/>
<rect x="33" y="7" width="414" height="1" fill="#00b0f0"/>
<rect x="144" y="0" width="1" height="16" fill="#10c0e0"/><rect x="149" y="0" width="1" height="16" fill="#10c0e0"/><rect x="144" y="15" width="6" height="1" fill="#10c0e0"/>
<rect x="361" y="0" width="1" height="16" fill="#10c0e0"/><rect x="366" y="0" width="1" height="16" fill="#10c0e0"/><rect x="361" y="15" width="6" height="1" fill="#10c0e0"/>
<rect x="0" y="250" width="447" height="2" fill="#00e4e4"/>
<rect x="241.500" y="193.500" width="22" height="23" fill="none" stroke="#ff00ff" stroke-width="1"/>
</g>
<rect x="209.70" y="0" width="2.400" height="252" fill="#fff"/>
<rect x="223.30" y="0" width="2.400" height="252" fill="#fff"/>
<rect x="254.30" y="0" width="2.400" height="252" fill="#fff"/>
<rect x="285.40" y="0" width="2.400" height="252" fill="#fff"/>
<rect x="298.90" y="0" width="2.400" height="252" fill="#fff"/>
<rect x="209.700" y="249.800" width="91.600" height="2.300" fill="#fff"/>
<path d="M211.300 117.500 L300.300 73" stroke="#fff" stroke-width="2.400"/>
<rect x="207.8" y="114.0" width="7" height="7" fill="#fff"/>
<rect x="296.9" y="69.5" width="7" height="7" fill="#fff"/>
</svg>
<div class="vl" style="color:#4a4a4a">Front (z/y)</div></div>
<div class="vp" id="vp4" style="left:509px;top:400px;width:448px;height:289px"><svg class="abs" style="left:0;top:0" width="448" height="289" viewBox="0 0 448 289">
<g shape-rendering="crispEdges">
<rect x="7" y="0" width="1" height="289" fill="#4a4a4a"/>
<rect x="44" y="0" width="1" height="289" fill="#4a4a4a"/>
<rect x="81" y="0" width="1" height="289" fill="#4a4a4a"/>
<rect x="118" y="0" width="1" height="289" fill="#4a4a4a"/>
<rect x="192" y="0" width="1" height="289" fill="#4a4a4a"/>
<rect x="229" y="0" width="1" height="289" fill="#4a4a4a"/>
<rect x="266" y="0" width="1" height="289" fill="#4a4a4a"/>
<rect x="303" y="0" width="1" height="289" fill="#4a4a4a"/>
<rect x="340" y="0" width="1" height="289" fill="#4a4a4a"/>
<rect x="377" y="0" width="1" height="289" fill="#4a4a4a"/>
<rect x="414" y="0" width="1" height="289" fill="#4a4a4a"/>
<rect x="0" y="26" width="448" height="1" fill="#4a4a4a"/>
<rect x="0" y="63" width="448" height="1" fill="#4a4a4a"/>
<rect x="0" y="100" width="448" height="1" fill="#4a4a4a"/>
<rect x="0" y="137" width="448" height="1" fill="#4a4a4a"/>
<rect x="0" y="174" width="448" height="1" fill="#4a4a4a"/>
<rect x="0" y="211" width="448" height="1" fill="#4a4a4a"/>
<rect x="0" y="285" width="448" height="1" fill="#4a4a4a"/>
<rect x="155" y="0" width="1" height="289" fill="#007878"/>
<rect x="0" y="248" width="448" height="1" fill="#007878"/>
<rect x="7" y="46" width="1" height="203" fill="#00c4ec"/>
<rect x="16" y="174" width="1" height="75" fill="#00e080"/>
<rect x="23" y="0" width="1" height="46" fill="#00b0e0"/>
<rect x="25" y="0" width="1" height="46" fill="#00b0e8"/>
<rect x="25" y="46" width="1" height="203" fill="#0098d0"/>
<rect x="99" y="63" width="1" height="186" fill="#00c8f0"/>
<rect x="210" y="63" width="1" height="186" fill="#00e0a0"/>
<rect x="284" y="0" width="1" height="44" fill="#00a0f0"/>
<rect x="287" y="0" width="1" height="44" fill="#00a0f0"/>
<rect x="284" y="46" width="1" height="203" fill="#00e0a0"/>
<rect x="286" y="46" width="1" height="17" fill="#00a0f0"/>
<rect x="294" y="174" width="1" height="75" fill="#00a0f0"/>
<rect x="303" y="46" width="1" height="17" fill="#00a0f0"/>
<rect x="303" y="63" width="1" height="186" fill="#00e0a0"/>
<rect x="327" y="0" width="1" height="138" fill="#00d0f0"/>
<rect x="331" y="0" width="1" height="46" fill="#00a0f0"/>
<rect x="331" y="46" width="1" height="91" fill="#00e0a0"/>
<rect x="331" y="137" width="1" height="37" fill="#0090c0"/>
<rect x="331" y="174" width="1" height="75" fill="#00a0f0"/>
<rect x="0" y="35" width="25" height="1" fill="#00c4ec"/>
<rect x="0" y="43" width="25" height="3" fill="#00ccf0"/>
<rect x="0" y="46" width="25" height="1" fill="#00c4ec"/>
<rect x="25" y="43" width="259" height="1" fill="#00e080"/>
<rect x="25" y="44" width="259" height="1" fill="#0090e0"/>
<rect x="25" y="45" width="259" height="1" fill="#002840"/>
<rect x="25" y="46" width="259" height="1" fill="#00e080"/>
<rect x="284" y="43" width="48" height="3" fill="#00a0f0"/>
<rect x="284" y="46" width="48" height="1" fill="#00a0f0"/>
<rect x="7" y="63" width="203" height="1" fill="#00a0d8"/>
<rect x="210" y="63" width="94" height="1" fill="#00e0a0"/>
<rect x="327" y="137" width="5" height="1" fill="#00d0f0"/>
<rect x="0" y="174" width="17" height="1" fill="#00e080"/>
<rect x="294" y="174" width="38" height="1" fill="#00a0f0"/>
<rect x="0" y="248" width="7" height="1" fill="#0090b0"/>
<rect x="7" y="248" width="315" height="2" fill="#00f0e0"/>
<rect x="322" y="248" width="9" height="1" fill="#00a0f0"/>
<rect x="145.500" y="201.500" width="19" height="18" fill="none" stroke="#ff00ff" stroke-width="1"/>
</g>
<g fill="none" stroke-width="1.100">
<path d="M0 156.300 L16.500 174" stroke="#00e080"/>
<path d="M295 173.800 L327.500 137.400" stroke="#00b0e0"/>
<path d="M41.200 0 L25.200 44.100" stroke="#00a0f0"/><path d="M39 0 L23.800 42.400" stroke="#00d0f0"/><path d="M29.200 0 L33.700 5.500" stroke="#00d0f0" stroke-width="1.500"/>
<path d="M13.400 3.500 L27.500 22.400" stroke="#00ffc0" stroke-width="2" stroke-dasharray="1.500 1"/>
<path d="M0 1.500 H10.100 L8.400 17 H0 M9.500 1 L0 28.300 M3 2 L8 16" stroke="#00c8f0"/>
<path d="M6.400 47 L20 52.400 L23 45.800" stroke="#00c8f0"/>
</g>
<rect x="117.10" y="0" width="2.400" height="249" fill="#fff"/>
<rect x="128.00" y="0" width="2.400" height="249" fill="#fff"/>
<rect x="154.20" y="0" width="2.400" height="249" fill="#fff"/>
<rect x="180.30" y="0" width="2.400" height="249" fill="#fff"/>
<rect x="191.10" y="0" width="2.400" height="249" fill="#fff"/>
<rect x="117.100" y="247" width="76.400" height="3" fill="#fff"/>
<path d="M155.400 100.400 L118.400 137.500 M155.400 100.400 L192.400 137.500 M118.400 137.500 H192.400" stroke="#bdbdbd" stroke-width="1" fill="none"/>
<polygon points="155.400,100.300 181.600,106.400 192.400,118.700 181.600,131.100 155.400,137.200 129.200,131.100 118.400,118.700 129.200,106.400" fill="none" stroke="#fff" stroke-width="2.300"/>
<rect x="151.9" y="96.7" width="7" height="7" fill="#fff"/>
<rect x="114.9" y="134.0" width="7" height="7" fill="#fff"/>
<rect x="188.9" y="134.1" width="7" height="7" fill="#fff"/>
</svg>
<div class="vl" style="color:#4a4a4a">Side (x/y)</div></div>

<!-- RIGHT PANEL -->

<div class="abs" style="left:961px;top:95px;width:3px;height:598px;background:#c8c8c8"></div>
<div class="abs" style="left:1212px;top:95px;width:3px;height:598px;background:#e6e6e6"></div>
<svg class="abs" style="left:960px;top:82px" width="8" height="12"><path d="M2 1 L6.5 5.5 L2 10Z" fill="#7a7a7a"/></svg>
<svg class="abs" style="left:1209px;top:82px" width="8" height="12"><path d="M7 1 L2.5 5.5 L7 10Z" fill="#7a7a7a"/></svg>
<div class="hl" style="top:79px;background:#a0a0a0"></div>
<div class="tri" style="top:89px"></div><div class="hdr" style="top:85px">Textures</div>
<div class="hl" style="top:100px;background:#e3e3e3"></div>
<div class="t" style="left:985px;top:111px;line-height:13px;transform:scaleX(0.880);font-size:12.500px;margin-top:-.5px">Group:</div>
<div class="abs" style="left:1028px;top:107px;width:179px;height:21px;border:1px solid #adadad;background:#e1e1e1"></div>
<div class="t" style="left:1032px;top:111px;line-height:13px;transform:scaleX(0.845);font-size:12.500px;margin-top:-.5px">All Textures</div>
<svg class="abs" style="left:1191px;top:114px" width="12" height="8"><path d="M1.5 1.5 L6 6 L10.5 1.5" fill="none" stroke="#333" stroke-width="1.1"/></svg>
<div class="t" style="left:979px;top:138px;line-height:13px;transform:scaleX(0.854);font-size:12.500px;margin-top:-.5px">Texture:</div>
<div class="abs" style="left:1028px;top:134px;width:179px;height:21px;border:1px solid #7a7a7a;background:#fff"></div>
<div class="t" style="left:1033px;top:138px;line-height:13px;transform:scaleX(0.880);font-size:12.500px;margin-top:-.5px">201_camera_diffuse1</div>
<svg class="abs" style="left:1191px;top:141px" width="12" height="8"><path d="M1.5 1.5 L6 6 L10.5 1.5" fill="none" stroke="#333" stroke-width="1.1"/></svg>
<div class="abs" style="left:971px;top:161px;width:164px;height:103px;border:1px solid #646464;background:#f0f0f0"></div>
<svg class="abs" style="left:1002px;top:162px" width="101" height="101" viewBox="0 0 665 668" preserveAspectRatio="none">
<defs><radialGradient id="tw" cx=".5" cy=".5" r=".5"><stop offset="0" stop-color="#e6e6e6"/><stop offset=".8" stop-color="#d4d4d4"/><stop offset="1" stop-color="#9a9a9a"/></radialGradient>
<linearGradient id="tb" x1="0" y1="0" x2="0" y2="1"><stop offset="0" stop-color="#4a4e4e"/><stop offset=".2" stop-color="#6c7070"/><stop offset=".45" stop-color="#585c5c"/><stop offset=".55" stop-color="#6a6e6e"/><stop offset=".8" stop-color="#464a4a"/><stop offset="1" stop-color="#5e6262"/></linearGradient>
<filter id="tbl"><feGaussianBlur stdDeviation="3"/></filter></defs>
<rect width="665" height="668" fill="#4a4241"/>
<g filter="url(#tbl)">
<rect width="665" height="250" fill="#585c5d"/>
<circle cx="133" cy="150" r="127" fill="#6b6f70"/><circle cx="133" cy="150" r="93" fill="none" stroke="#565a5b" stroke-width="4"/><circle cx="133" cy="150" r="18" fill="#747878"/>
<circle cx="268" cy="46" r="44" fill="#727575"/><circle cx="272" cy="48" r="22" fill="#626565"/>
<circle cx="383" cy="166" r="128" fill="#7b7f7f"/><circle cx="383" cy="166" r="104" fill="#6a6e6e" stroke="#2e3131" stroke-width="10"/><circle cx="383" cy="166" r="14" fill="#7e8282"/>
<path d="M490 0 H665 V125 Q600 150 540 125 Q500 95 490 40Z" fill="#fff"/><circle cx="567" cy="74" r="62" fill="url(#tw)"/>
<rect x="520" y="148" width="145" height="120" fill="#2b2c2c"/><rect x="545" y="165" width="100" height="80" fill="#383a3a"/>
<circle cx="506" cy="290" r="47" fill="#030303"/>
<path d="M462 365 L555 345 L568 400 L520 440 L470 420Z" fill="#2c2c2c"/><circle cx="510" cy="390" r="10" fill="#0a0a0a"/>
<path d="M240 212 L268 212 L272 270 L325 335 L305 430 L205 430 L185 335 L238 270Z" fill="#2b2b2b"/>
<path d="M340 300 L455 300 L460 425 L325 428Z" fill="#252525"/><ellipse cx="362" cy="420" rx="40" ry="16" fill="#0c0c0c"/>
<path d="M45 328 L165 328 L150 458 L58 458Z" fill="#2d2d2d"/>
<path d="M0 270 L110 290 L115 320 L30 310 L40 540 L0 560Z" fill="#1c1c1c"/><rect x="70" y="455" width="40" height="130" fill="#1e1e1e"/>
<rect x="622" y="280" width="43" height="290" fill="#202020"/>
<rect x="153" y="436" width="460" height="136" fill="url(#tb)"/>
<rect x="0" y="575" width="435" height="93" fill="#4b4f4f"/><rect x="15" y="600" width="400" height="40" fill="#5c6060"/><rect x="12" y="628" width="60" height="34" fill="#1a1a1a"/><rect x="365" y="628" width="60" height="34" fill="#1a1a1a"/><circle cx="205" cy="603" r="9" fill="#0a0a0a"/>
<rect x="440" y="578" width="215" height="90" fill="#5b5f5f"/><rect x="440" y="578" width="215" height="12" fill="#3a3d3d"/><rect x="440" y="640" width="215" height="10" fill="#3e4141"/>
</g>
</svg>

<div class="t" style="left:1144px;top:162px;line-height:13px;font-size:12px;transform:scaleX(.9)">512 x 512</div>
<div class="btn" style="left:1142px;top:178px;width:64px"><span style="display:inline-block;transform:scaleX(0.792)">Apply</span></div>
<div class="btn" style="left:1142px;top:206px;width:64px"><span style="display:inline-block;transform:scaleX(0.845)">Browse...</span></div>
<div class="btn" style="left:1142px;top:234px;width:64px"><span style="display:inline-block;transform:scaleX(0.845)">Replace...</span></div>
<div class="hl" style="top:270px;background:#a0a0a0"></div>
<div class="tri" style="top:279px"></div><div class="hdr" style="top:275px">Visgroups</div>
<div class="hl" style="top:290px;background:#e3e3e3"></div>
<div class="abs" style="left:971px;top:297px;width:238px;height:166px;border:1px solid #646464;background:#fff"></div>
<svg class="abs" style="left:979px;top:299px" width="30" height="14"><rect x=".5" y="3.5" width="8" height="8" fill="#fff" stroke="#919191"/><path d="M2 7.5h5M4.5 5v5" stroke="#1b3a9c" stroke-width="1" fill="none"/><path d="M10 7.5h1" stroke="#999"/><rect x="12.5" y=".5" width="12" height="12" fill="#fff" stroke="#333"/><path d="M15 6.5 L17.5 9 L22.5 3.5" fill="none" stroke="#222" stroke-width="1.1"/></svg>
<div class="t" style="left:1009px;top:299.600px;line-height:13px;transform:scaleX(0.827);font-size:12.500px;margin-top:-.5px">Auto</div>
<div class="btn" style="left:972px;top:470px;width:33px"><span style="display:inline-block;transform:scaleX(0.810)">Edit</span></div>
<div class="btn" style="left:1013px;top:470px;width:44px"><span style="display:inline-block;transform:scaleX(0.836)">Select</span></div>
<div class="btn" style="left:1065px;top:470px;width:55px"><span style="display:inline-block;transform:scaleX(0.845)">Show All</span></div>
<div class="btn" style="left:1128px;top:470px;width:38px"><span style="display:inline-block;transform:scaleX(0.818)">New</span></div>
<div class="hl" style="top:494px;background:#a0a0a0"></div>
<div class="tri" style="top:504px"></div><div class="hdr" style="top:500px">Contextual Help</div>
<div class="hl" style="top:515px;background:#e3e3e3"></div>
<div class="help" style="top:520px"><b>Click</b> and drag to define the clipping plane.</div>
<div class="help" style="top:537px"><b>Click</b> and drag any of the three points to change</div>
<div class="help" style="top:550px">the orientation of the plane.</div>
<div class="help" style="top:567px">Press <b>enter</b> to cut the selected solids along the</div>
<div class="help" style="top:580px">clipping plane.</div>


<!-- STATUS BAR -->

<div class="abs" style="left:49px;top:95px;width:3px;height:598px;background:#e6e6e6"></div>
<div class="abs" style="left:61px;top:693px;width:1146px;height:3px;background:#e6e6e6"></div>
<svg class="abs" style="left:48px;top:692px" width="10" height="7"><path d="M1 6 L5 1.5 L9 6Z" fill="#7a7a7a"/></svg>
<div class="abs" style="left:0;top:700px;width:1218px;height:1px;background:#d9d9d9"></div>
<div class="sb" style="left:654px;width:129px">Solid</div>
<div class="sb" style="left:785px;width:128px"></div>
<div class="sb" style="left:915px;width:128px"><span style="display:inline-block;transform:scaleX(.92)">128 x 128 x 704</span></div>
<div class="sb" style="left:1045px;width:78px"></div>
<div class="sb" style="left:1125px;width:78px"><span style="display:inline-block;transform:scaleX(.94)">Grid: 64</span></div>
<svg class="abs" style="left:1204px;top:710px" width="12" height="12"><g fill="#b0b0b0"><rect x="9" y="1" width="2" height="2"/><rect x="5" y="5" width="2" height="2"/><rect x="9" y="5" width="2" height="2"/><rect x="1" y="9" width="2" height="2"/><rect x="5" y="9" width="2" height="2"/><rect x="9" y="9" width="2" height="2"/></g></svg>

</body>
</html>
